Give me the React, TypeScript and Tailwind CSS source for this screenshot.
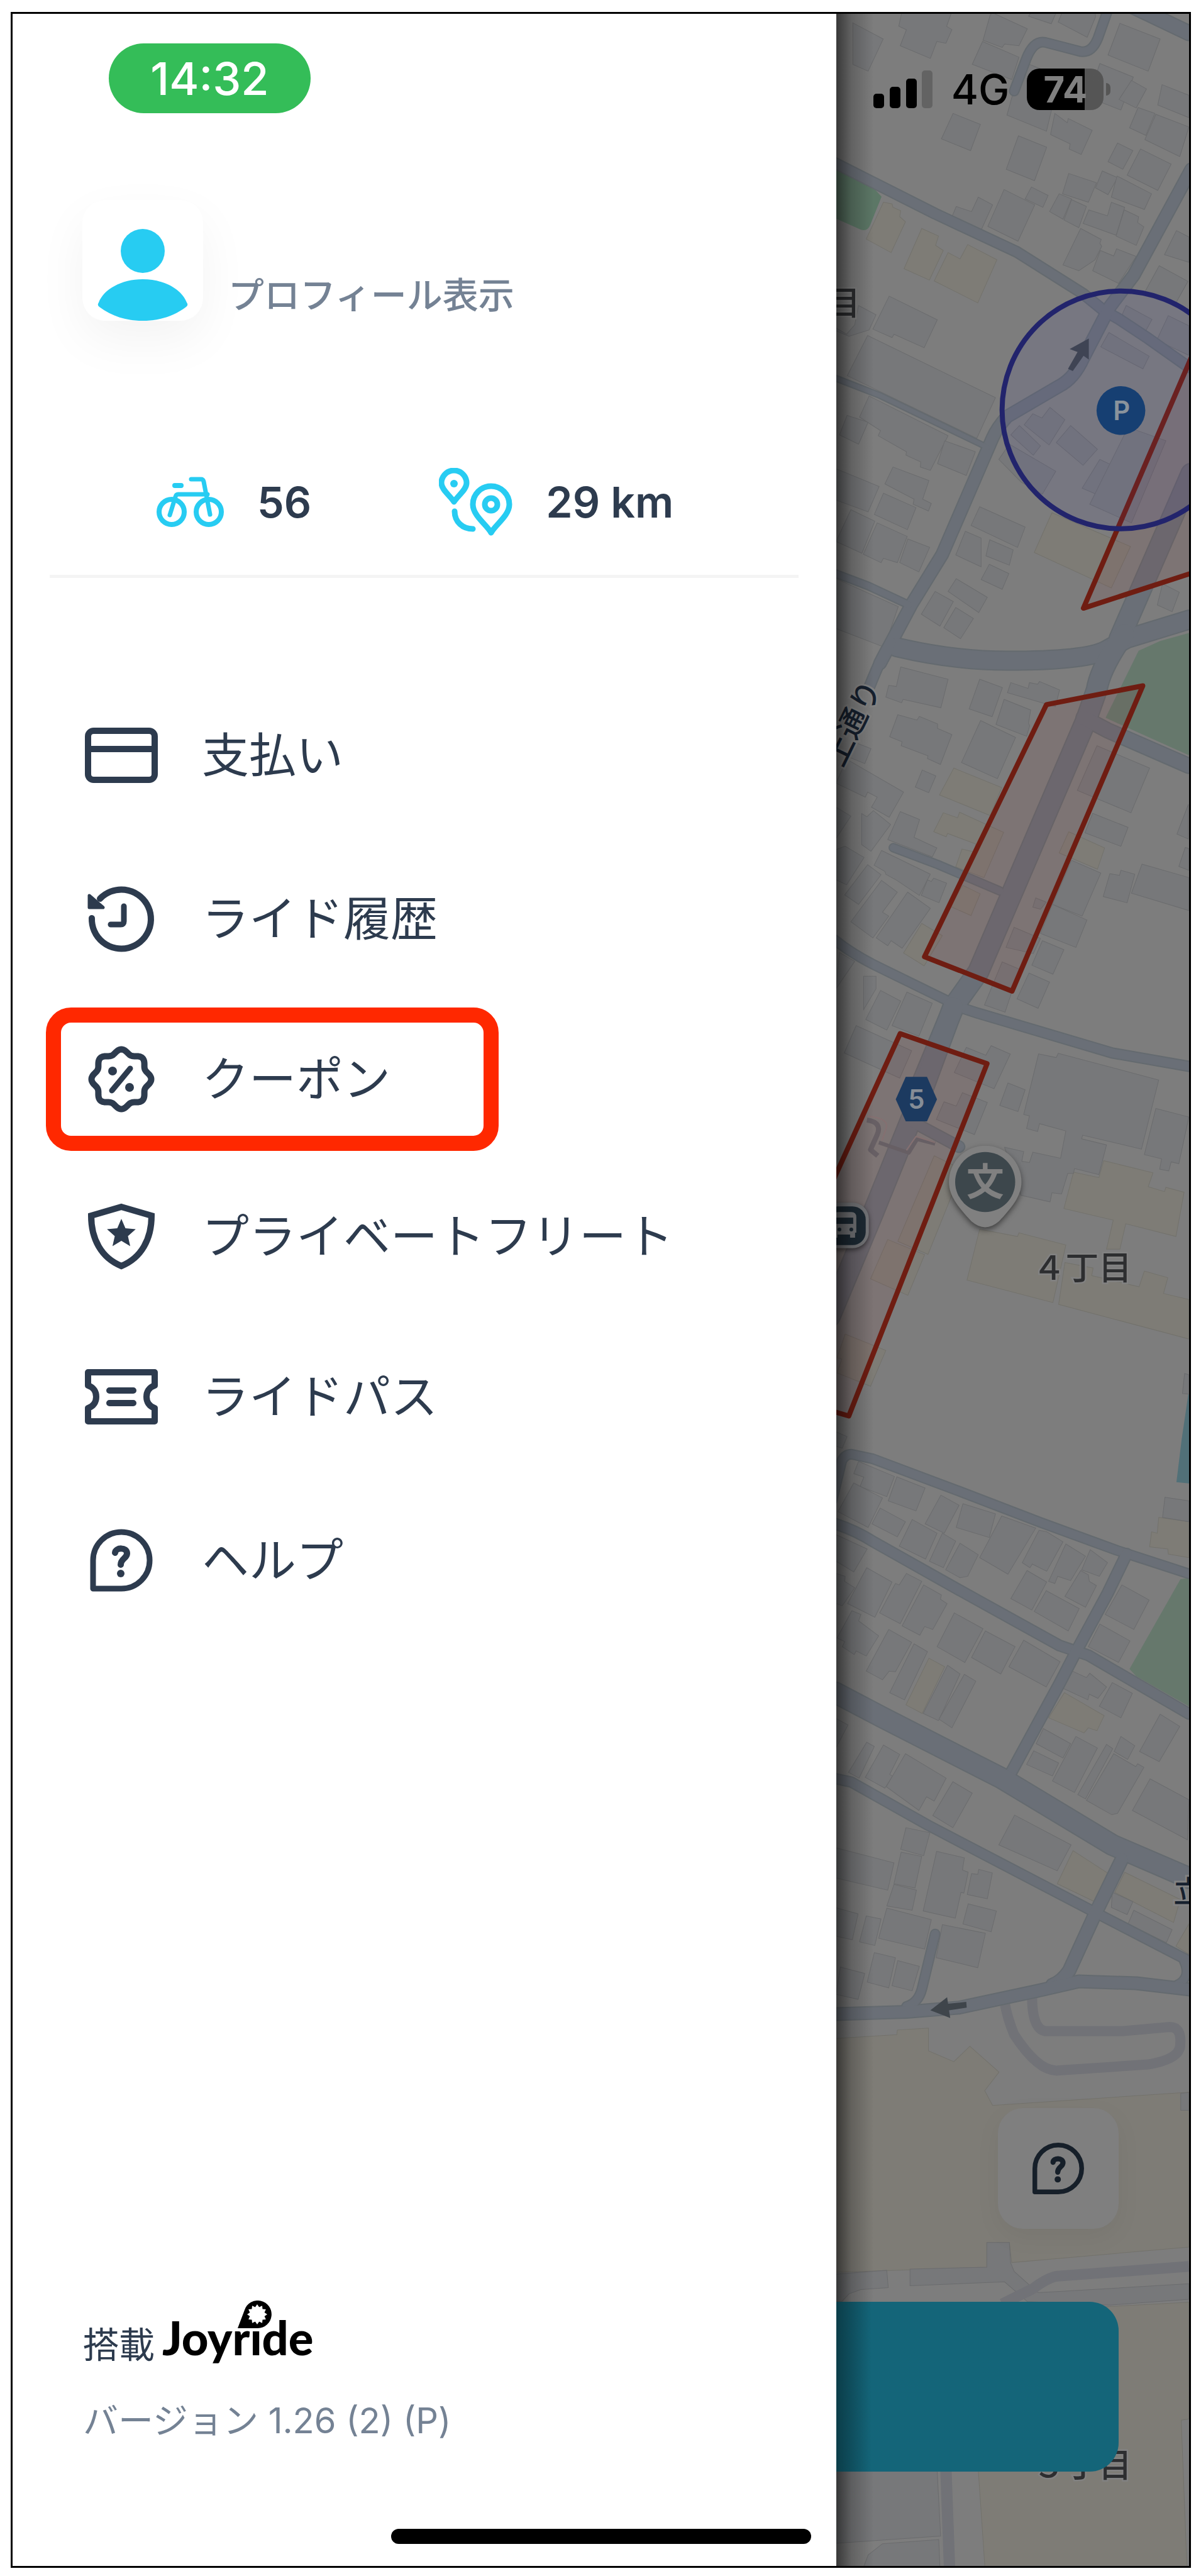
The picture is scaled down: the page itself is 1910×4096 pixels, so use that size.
import type { ReactNode } from 'react';

type Tile = 'a' | 'b' | 'c' | 'd' | 'e';

// every tile keeps its own local grid, the transform puts it on the map
const TILE_TRANSFORM: Record<Tile, string> = {
  a: 'translate(1320 0) scale(0.38265 0.67602)',
  b: 'translate(1320 1040) scale(0.38265 0.44643)',
  c: 'translate(1320 1600) scale(0.38265 0.48469)',
  d: 'translate(1320 2300) scale(0.38265 0.57398)',
  e: 'translate(1320 3150) scale(0.38265 0.61735)',
};

const ROADS: { tile: Tile; d: string; w: number }[] = [
  { tile: 'a', d: 'M1190 10 L1140 90 Q1115 125 1070 122 L920 100 Q870 95 840 140 L790 215', w: 13 },
  { tile: 'a', d: 'M1250 5 L1520 78', w: 22 },
  { tile: 'a', d: 'M40 385 L180 425 L460 505 L800 595 L1080 695 L1160 732 L1230 755 L1350 800 L1520 868', w: 15 },
  { tile: 'a', d: 'M1530 400 L1290 650 L1190 725 L1080 845 Q1040 895 980 912 L760 985 Q720 1010 700 1035 L490 1310 L360 1430 L230 1568', w: 18 },
  { tile: 'a', d: 'M40 893 L230 935 L680 1058', w: 7 },
  { tile: 'a', d: 'M40 1355 L180 1385 L350 1430', w: 10 },
  { tile: 'a', d: 'M300 1530 Q540 1562 760 1562 Q1100 1562 1180 1535 L1260 1510 L1520 1465', w: 28 },
  { tile: 'a', d: 'M1530 1120 L1230 1510', w: 31 },
  { tile: 'b', d: 'M1250 -60 Q1150 60 1135 140 L1090 250 L640 1150 L540 1270 L380 1600', w: 31 },
  { tile: 'b', d: 'M1080 240 L1180 285 L1520 412', w: 22 },
  { tile: 'b', d: 'M275 -30 Q240 10 185 130', w: 15 },
  { tile: 'b', d: 'M285 705 L470 765 L730 860', w: 11 },
  { tile: 'b', d: 'M40 1035 Q120 1090 230 1135 L480 1240 L540 1265', w: 13 },
  { tile: 'b', d: 'M540 1270 L640 1298 L1200 1440 L1520 1488', w: 14 },
  { tile: 'c', d: 'M535 20 L390 330 L200 700 L20 1040', w: 31 },
  { tile: 'c', d: 'M370 400 L560 480', w: 16 },
  { tile: 'd', d: 'M30 170 L70 60 Q85 42 110 42 L200 55 L560 145 L900 232 L1220 310 L1520 375', w: 13 },
  { tile: 'd', d: 'M40 235 Q130 255 200 285 L560 420 L980 575 L1100 602 L1520 765', w: 15 },
  { tile: 'd', d: 'M1260 320 L1180 430 L1050 590 L980 680 L760 950', w: 16 },
  { tile: 'd', d: 'M40 705 L240 775 L740 945 L1200 1130 L1520 1222', w: 31 },
  { tile: 'd', d: 'M40 945 L110 955 L430 1075 L760 1190 L1120 1315 L1520 1453', w: 14 },
  { tile: 'd', d: 'M1240 1170 L1130 1320 L1020 1480 Q990 1510 950 1520', w: 19 },
  { tile: 'd', d: 'M1500 1455 Q1530 1500 1470 1520', w: 12 },
  { tile: 'd', d: 'M460 1378 L405 1530 Q390 1570 340 1580', w: 13 },
  { tile: 'e', d: 'M40 112 L340 106 L560 95 L900 50 L1060 27 L1300 32 L1520 48', w: 18 },
];

const LANES: { d: string; w: number }[] = [
  { d: 'M750 80 Q760 120 790 165 Q890 260 970 258 L1350 242 Q1485 228 1484 190 Q1490 145 1440 145 L1240 156 L920 156 Q866 150 865 70', w: 16 },
  { d: 'M740 862 L870 822 Q940 790 980 790 L1520 765', w: 17 },
  { d: 'M505 1290 L520 1545', w: 18 },
];

const GREY_BUILDINGS: Record<Tile, string[]> = {
  a: [
    '116,54 243,92 180,168 116,152',
    '320,30 308,62 340,70 314,108 440,138 467,98 505,102 530,70 508,62 528,30',
    '690,35 660,95 740,112 750,104 810,108 845,68 700,30',
    '658,98 810,135 780,188 615,152',
    '860,30 850,38 945,56 965,30',
    '990,30 974,52 1095,88 1130,40 1128,30',
    '1232,55 1400,92 1350,168 1182,130',
    '535,268 649,294 608,356 486,328',
    '808,321 926,348 875,427 757,400',
    '822,145 980,180 925,310 760,272',
    '960,268 1012,290 1016,280 1116,308 1070,365 1020,352 1024,340 942,318',
    '1148,150 1288,182 1236,260 1100,230',
    '1280,190 1343,210 1300,255 1228,235',
    '1408,200 1520,225 1520,278 1390,248',
    '1308,254 1378,268 1340,320 1272,302',
    '1382,270 1520,300 1482,370 1336,330',
    '1222,338 1286,356 1244,400 1182,382',
    '1318,352 1446,388 1390,450 1262,414',
    '1018,410 1134,432 1100,478 992,458',
    '1158,404 1222,420 1182,460 1130,444',
    '1220,416 1364,458 1334,495 1196,466',
    '978,458 1030,470 994,518 938,500',
    '1030,472 1092,488 1060,538 998,520',
    '1102,496 1180,510 1196,478 1252,490 1216,556 1078,528',
    '1250,496 1310,512 1306,526 1332,536 1300,580 1216,558',
    '862,442 932,462 910,490 836,470',
    '748,448 876,484 806,570 680,535',
    '640,466 700,484 652,544 532,510 548,488 612,500',
    '1068,540 1154,566 1148,575 1156,582 1128,614 1060,640 994,626',
    '1150,592 1206,605 1218,588 1300,606 1226,670 1118,640',
    '1468,545 1520,560 1520,620 1418,602',
    '1396,628 1516,665 1462,720 1336,690',
    '268,700 469,756 414,822 288,790 280,798 200,778',
    '140,722 213,744 184,780 100,795 46,782 46,775 90,790 124,768',
    '178,793 712,940 634,1036 93,888',
    '92,982 180,998 140,1050 60,1028',
    '184,936 514,1030 440,1112 398,1104 400,1092 338,1076 340,1068 222,1030 232,1018 144,986',
    '500,1042 628,1068 590,1124 470,1096',
    '46,1108 226,1150 180,1210 46,1182',
    '284,1104 434,1136 408,1180 444,1190 432,1208 368,1192 372,1180 250,1144',
    '244,1166 380,1200 344,1252 206,1216',
    '108,1205 208,1232 154,1308 46,1280',
    '218,1236 343,1268 302,1330 244,1320 234,1330 160,1310',
    '346,1274 437,1294 392,1352 312,1330',
    '646,1198 836,1246 804,1294 610,1242',
    '586,1256 652,1272 652,1340 546,1312',
    '688,1276 786,1300 770,1336 672,1314',
    '686,1334 768,1356 740,1393 652,1370',
    '548,1368 678,1412 642,1448 514,1398',
    '460,1398 536,1422 480,1480 402,1452',
    '546,1436 620,1462 566,1510 496,1484',
    '46,1368 306,1434 248,1530 46,1486',
    '1410,1380 1480,1400 1450,1446 1388,1430',
    '1258,722 1366,755 1336,786 1232,756',
    '1186,786 1354,842 1328,872 1152,820',
    '1434,746 1520,770 1520,840 1386,804',
    '940,963 1002,992 936,1052 832,1004 868,978 906,988',
    '812,1006 900,1054 870,1076 776,1028',
    '1026,1006 1138,1062 1078,1100 966,1046',
    '770,1050 964,1114 908,1168 820,1140 726,1086',
    '1148,1086 1200,1100 1148,1172 1074,1154',
    '1266,1010 1424,1042 1280,1236 1106,1192',
  ],
  b: [
    '316,58 514,102 484,204 326,174 320,186 254,166 266,124 298,128',
    '646,102 741,132 698,236 602,208',
    '776,114 848,135 854,114 888,120 896,110 980,140 962,200 762,150',
    '748,174 859,212 850,260 855,268 842,306 714,264',
    '304,229 384,248 394,235 470,262 470,278 530,300 482,407 428,386 430,376 318,340 322,326 270,308',
    '650,250 796,310 720,458 570,400',
    '130,330 192,350 166,404 80,374',
    '90,388 328,506 268,596 194,560 218,524 178,506 168,524 46,474',
    '406,427 463,448 433,508 377,488',
    '46,560 108,592 46,672',
    '153,583 175,594 202,572 274,622 192,718 153,694',
    '314,576 395,604 372,668 467,706 448,738 262,676',
    '46,712 84,700 163,740 90,838 46,820',
    '236,715 440,800 394,876 300,822 254,800 250,790 205,768',
    '178,766 234,802 140,908 82,874',
    '236,822 302,864 240,936 266,950 200,1028 108,970',
    '345,864 440,922 322,1065 276,1038 262,1056 214,1028',
    '428,820 444,826 454,814 508,832 476,902 402,876',
    '60,1080 124,1112 46,1210',
    '161,1165 213,1165 213,1210 161,1285',
    '232,1216 316,1254 258,1358 170,1320',
    '342,1222 448,1262 392,1380 280,1342',
    '130,1342 362,1432 312,1530 80,1440',
    '1136,340 1356,420 1278,580 1054,500',
    '1118,582 1266,632 1236,700 1086,652',
    '1030,750 1152,796 1074,950 950,908',
    '950,908 1094,964 1048,1062 900,1012',
    '880,885 924,900 900,925 868,918',
    '1190,798 1230,804 1236,786 1294,800 1262,902 1162,880',
    '1324,764 1520,812 1520,930 1280,868',
    '1518,550 1518,674 1470,656',
    '1505,704 1520,708 1520,786 1478,772',
    '790,990 900,1030 870,1084 756,1062',
    '908,1038 998,1070 952,1158 864,1126',
    '852,1154 938,1186 890,1280 802,1246',
    '740,1114 812,1140 752,1294 666,1268',
    '694,1414 774,1444 706,1568 540,1510 590,1420 672,1448',
  ],
  c: [
    '892,174 966,186 974,172 1394,260 1322,488 1076,442 1072,454 1176,474 1144,572 1042,552 1038,568 1014,568 988,636 948,632 940,662 818,640 750,482 830,496 822,528 854,532 868,498 984,518 1006,428 896,404 888,430 842,420 854,378 830,374',
    '764,270 836,292 806,364 730,344',
    '574,302 678,334 624,440 465,390 497,332 548,346',
    '1382,354 1520,382 1478,536 1446,530 1436,560 1398,554 1406,520 1334,506',
    '46,1420 92,1436 72,1474 46,1468',
    '1502,1228 1520,1232 1520,1296 1493,1294',
  ],
  d: [
    '140,62 290,104 258,160 146,132 162,106 120,96',
    '120,122 240,164 180,246 54,202',
    '300,105 418,136 380,200 264,172',
    '230,192 336,230 302,272 196,236',
    '484,156 560,184 498,262 418,236',
    '576,180 712,208 686,274 548,246',
    '738,214 880,248 764,376 646,330',
    '364,224 468,262 420,334 310,298',
    '490,262 546,284 494,358 436,340',
    '564,290 640,322 596,382 564,386 504,364',
    '894,254 926,258 994,286 926,368 866,348 856,358 824,344',
    '1006,292 1088,326 1026,394 972,382 960,402 934,396',
    '1108,308 1180,344 1146,382 1072,364',
    '844,366 926,398 864,476 776,444',
    '1068,366 1100,378 1104,396 1134,408 1088,468 1002,438',
    '924,422 1062,472 1016,534 874,480',
    '1240,406 1354,448 1290,530 1170,488',
    '1148,515 1274,562 1226,622 1100,578',
    '46,266 176,306 120,370 46,340',
    '46,374 84,382 82,396 124,414 72,464 46,458',
    '174,358 280,398 208,496 94,458',
    '340,374 404,396 314,514 228,484 294,402 310,406',
    '412,406 486,434 482,446 510,458 450,530 416,522 396,546 322,520',
    '112,478 150,488 140,506 224,548 172,604 130,590 122,600 72,578 82,564 50,554',
    '266,530 362,566 294,648 268,646 240,670 172,646',
    '372,570 428,592 332,726 270,706',
    '540,484 660,528 584,622 468,578',
    '670,534 794,578 734,654 612,608',
    '830,560 982,620 924,690 768,634',
    '512,630 564,654 474,784 410,764',
    '582,655 630,674 530,804 476,780',
    '46,778 96,796 46,860',
    '174,844 206,856 142,944 98,928',
    '244,852 312,878 270,934 282,938 250,972 168,942',
    '336,876 506,944 456,1008 424,996 392,1034 256,968',
    '534,954 615,986 534,1082 450,1048',
    '1030,645 1092,664 1106,652 1176,690 1140,722 1104,710 1098,726 994,694',
    '1200,678 1284,708 1236,776 1146,744',
    '912,806 1026,848 994,888 882,848',
    '872,868 976,902 950,938 842,906',
    '1048,828 1138,860 1042,984 950,952',
    '1176,850 1202,862 1088,1002 1056,990',
    '1236,828 1294,854 1264,892 1208,870',
    '1206,876 1298,912 1306,904 1332,914 1222,1042 1198,1046 1092,1006',
    '1400,766 1482,800 1396,898 1314,870',
    '1358,946 1520,1004 1514,1116 1284,1034',
    '1420,162 1520,172 1520,230 1410,218',
    '792,1047 1028,1130 970,1202 726,1130',
    '338,1082 438,1096 412,1160 316,1142',
    '318,1150 404,1162 376,1250 288,1238',
    '46,1138 288,1180 262,1256 46,1222',
    '288,1240 382,1256 364,1312 258,1300',
    '466,1148 582,1166 574,1200 598,1206 580,1264 568,1262 544,1334 410,1314',
    '642,1198 699,1208 678,1280 594,1268 612,1210 638,1212',
    '598,1294 716,1314 694,1372 576,1350',
    '46,1305 138,1322 114,1394 46,1384',
    '172,1328 234,1336 208,1410 144,1400',
    '258,1306 444,1338 416,1420 224,1390',
    '490,1352 670,1376 638,1472 464,1444',
    '206,1430 294,1444 266,1528 176,1512',
    '304,1452 394,1468 364,1536 280,1522',
    '64,1470 166,1488 138,1560 46,1546',
    '1200,1262 1286,1288 1262,1324 1196,1304',
    '1290,1312 1450,1366 1426,1402 1266,1350',
  ],
  e: [
    '46,785 258,775 264,820 150,825 100,836 70,856 46,856',
    '355,772 676,767 676,703 770,703 775,755 790,778 890,833 1520,810 1520,850 1190,865 845,856 750,805 355,815',
    '46,1290 468,1290 483,1463 46,1482',
    '160,1545 180,1512 240,1483 475,1472 480,1545',
    '1486,317 1520,315 1520,361 1486,361',
  ],
};

const SAND_BUILDINGS: Record<Tile, string[]> = {
  a: [
    '244,478 280,482 284,490 316,498 312,512 336,524 276,597 172,565',
    '404,540 474,558 462,580 494,592 436,662 330,635',
    '514,597 564,612 596,578 718,614 638,716 456,664',
    '948,1212 1276,1292 1196,1390 874,1306',
  ],
  b: [
    '538,420 738,490 690,590 478,516',
    '494,580 554,598 562,578 746,650 664,812 546,774 572,710 622,720 630,692 512,654 506,666 454,648',
    '576,840 648,870 610,948 520,914',
    '1018,648 1168,706 1138,782 978,724',
    '404,976 490,1020 414,1128 328,1082',
  ],
  c: [
    '456,510 546,545 545,610 430,835 304,792',
    '262,786 416,836 346,970 190,916',
    '84,1098 254,1152 190,1270 50,1226 70,1180 50,1176',
    '646,752 804,776 810,764 1006,804 952,994 593,920',
    '1164,526 1370,566 1350,612 1418,628 1424,614 1500,630 1466,776 1256,734 1232,818 1176,818 1204,722 998,684 1038,564 1144,582',
    '1002,862 1120,880 1114,905 1312,942 1334,890 1432,912 1414,964 1520,984 1520,1114 976,1000',
  ],
  d: [
    '434,610 500,634 406,764 338,740',
    '1000,706 1166,770 1136,812 1100,804 1082,818 934,776',
    '1394,218 1520,230 1520,330 1434,320 1432,306 1356,300 1364,258 1388,262',
    '1036,1146 1180,1208 1126,1288 970,1238',
    '1252,1206 1484,1282 1456,1346 1210,1262',
    '1520,1350 1520,1434 1466,1412',
  ],
  e: [
    '46,175 300,165 302,153 432,148 432,207 538,235 605,195 727,262 667,310 700,348 1520,314 1520,715 780,755 770,703 676,703 676,767 46,780',
    '640,1290 668,1545 1512,1545 1488,1163 1520,1160 1520,858 1150,870 1000,1290',
  ],
};

const TILES = Object.keys(TILE_TRANSFORM) as Tile[];

const MAP_TEXT = 'font-["Inter","Noto_Sans_CJK_JP",sans-serif]';

const CityMap = () => (
  <svg
    className="absolute inset-0 h-full w-full"
    viewBox="1338 22 565 4079"
    preserveAspectRatio="xMinYMin slice"
    aria-label="地図"
  >
    <defs>
      <linearGradient id="drawerShadow" x1="0" x2="1" y1="0" y2="0">
        <stop offset="0" stopColor="#000" stopOpacity="0.55" />
        <stop offset="0.4" stopColor="#000" stopOpacity="0.22" />
        <stop offset="1" stopColor="#000" stopOpacity="0" />
      </linearGradient>
    </defs>
    <rect x="1330" y="0" width="600" height="4130" fill="#7d7d7d" />

    {/* parks and water */}
    <g transform={TILE_TRANSFORM.a}>
      <path d="M40 398 L180 430 L236 465 L190 530 Q178 548 150 543 L40 515Z" fill="#5c7766" />
    </g>
    <g transform={TILE_TRANSFORM.b} fill="#66786c">
      <path d="M1530 -66 L1400 -35 L1310 0 L1172 240 L1530 378Z" />
    </g>
    <g transform={TILE_TRANSFORM.d}>
      <path d="M1485 390 L1530 385 V748 L1300 660 L1272 640Z" fill="#66786c" />
      <path d="M1530 -180 L1490 0 L1468 120 L1530 124Z" fill="#517078" />
    </g>

    {TILES.map((tile) => (
      <g key={tile} transform={TILE_TRANSFORM[tile]} strokeWidth="1">
        {SAND_BUILDINGS[tile].map((points) => (
          <polygon key={points} points={points} fill="#7e7c76" stroke="#73726c" vectorEffect="non-scaling-stroke" />
        ))}
        {GREY_BUILDINGS[tile].map((points) => (
          <polygon key={points} points={points} fill="#77787a" stroke="#6b6c6e" vectorEffect="non-scaling-stroke" />
        ))}
      </g>
    ))}

    <g transform={TILE_TRANSFORM.e} fill="none" stroke="#717277">
      {LANES.map((lane) => (
        <path key={lane.d} d={lane.d} strokeWidth={lane.w} vectorEffect="non-scaling-stroke" />
      ))}
    </g>

    {/* casings first so that crossings stay open */}
    <g fill="none" stroke="#646a6f" strokeLinecap="round" strokeLinejoin="round">
      {ROADS.map((road) => (
        <g key={road.d} transform={TILE_TRANSFORM[road.tile]}>
          <path d={road.d} strokeWidth={road.w + 4} vectorEffect="non-scaling-stroke" />
        </g>
      ))}
    </g>
    <g fill="none" stroke="#6a6f77" strokeLinecap="round" strokeLinejoin="round">
      {ROADS.map((road) => (
        <g key={road.d} transform={TILE_TRANSFORM[road.tile]}>
          <path d={road.d} strokeWidth={road.w} vectorEffect="non-scaling-stroke" />
        </g>
      ))}
    </g>

    {/* footbridge */}
    <g transform={TILE_TRANSFORM.c} fill="none" strokeLinejoin="round">
      <path d="M175 392 Q240 400 218 440 L190 490 L220 510" stroke="#65666b" strokeWidth="8" vectorEffect="non-scaling-stroke" />
      <path d="M225 466 L350 500 L385 455 L460 470" stroke="#65666b" strokeWidth="6" vectorEffect="non-scaling-stroke" />
      <path d="M175 380 Q270 385 255 420 L238 460 M340 492 L380 446 L460 466" stroke="#86797a" strokeWidth="2" vectorEffect="non-scaling-stroke" />
    </g>

    {/* one way arrows */}
    <g fill="#3f454b">
      <path transform={TILE_TRANSFORM.a} d="M1015 872 L1055 832 L1022 825 L1102 800 V850 L1080 841 L1035 877Z" />
      <path transform={TILE_TRANSFORM.e} d="M440 102 L510 68 L514 85 L590 80 L592 95 L518 102 L523 122Z" />
    </g>

    {/* zones */}
    <g fill="#7d2d2d" fillOpacity="0.11" stroke="#6f1d12" strokeWidth="8" strokeLinejoin="round">
      <path d="M1915 549 L1733 972 L1915 913Z" />
      <path d="M1674 1126 L1828 1096 L1619 1584 L1479 1529Z" />
      <path d="M1440 1652 L1579 1700 L1358 2263 L1310 2249 V1937Z" />
    </g>
    <circle cx="1793" cy="655" r="190" fill="#4848a8" fillOpacity="0.1" stroke="#22246c" strokeWidth="8" />

    <g className={MAP_TEXT} textAnchor="middle">
      <circle cx="1793" cy="656" r="39" fill="#163f72" />
      <text x="1794" y="671" fontSize="42" fontWeight="600" fill="#8a939c">P</text>

      <path d="M1433 1757 L1449 1721 H1483 L1499 1757 L1483 1792 H1449Z" fill="#1c3a60" />
      <text x="1466" y="1772" fontSize="42" fontWeight="600" fill="#868d96">5</text>

      <path
        d="M1576 1831 A58 58 0 0 1 1634 1889 C1634 1912 1618 1930 1598 1952 Q1576 1971 1554 1952 C1534 1930 1518 1912 1518 1889 A58 58 0 0 1 1576 1831Z"
        fill="#808080"
        className="drop-shadow-[0_4px_5px_rgba(0,0,0,0.5)]"
      />
      <circle cx="1576" cy="1889" r="48" fill="#3d474c" />
      <text x="1576" y="1911" fontSize="60" fontWeight="700" fill="#808080">文</text>

      <rect x="1314" y="1922" width="76" height="73" rx="26" fill="#76777a" className="drop-shadow-[0_3px_4px_rgba(0,0,0,0.5)]" />
      <rect x="1320" y="1928" width="65" height="62" rx="21" fill="#1d2a34" />
      <path d="M1330 1945 Q1330 1937 1342 1937 H1362 Q1370 1937 1370 1945 V1970 H1368 V1978 H1360 V1973 H1340 V1978 H1330Z" fill="#76777a" />
      <path d="M1338 1946 H1365 V1956 H1338Z" fill="#1d2a34" />
      <circle cx="1343" cy="1965" r="3" fill="#1d2a34" />
      <circle cx="1362" cy="1965" r="3" fill="#1d2a34" />

      <g fill="#2d2e30" stroke="#828282" strokeWidth="5" paintOrder="stroke" fontSize="53" fontWeight="500">
        <text x="1731" y="2045">４丁目</text>
        <text x="1731" y="3959">５丁目</text>
        <text x="1350" y="503">目</text>
      </g>
      <g fill="#16202e" stroke="#828282" strokeWidth="6" paintOrder="stroke" fontSize="48" fontWeight="500">
        <text x="1901" y="3041">立</text>
        <text transform="translate(1379 1163) rotate(-64)">上通り</text>
      </g>
    </g>

    <rect x="1338" y="0" width="60" height="4130" fill="url(#drawerShadow)" />
  </svg>
);

const StatusIcons = () => (
  <div className="relative flex h-[66px] items-center pl-[59px] text-black">
    <svg width="94" height="60" viewBox="0 0 94 60" aria-hidden="true">
      <rect x="0" y="37" width="17" height="23" rx="5" />
      <rect x="26" y="26" width="17" height="34" rx="5" />
      <rect x="52" y="13" width="17" height="47" rx="5" />
      <rect x="77" y="0" width="17" height="60" rx="5" fill="#636363" />
    </svg>
    <span className="ml-[30px] text-[66px] leading-none font-medium">4G</span>
    <div className="ml-7 flex h-[66px] w-[122px] items-center justify-center rounded-[20px] bg-linear-to-r from-black from-75% to-[#555555] to-75% text-[58px] leading-none font-bold text-[#808080]">
      74
    </div>
    <div className="ml-1 h-5 w-[7px] rounded-r-full bg-[#555555]" />
  </div>
);

const Glyph = ({ children, className = 'size-[116px]' }: { children: ReactNode; className?: string }) => (
  <svg
    className={className}
    viewBox="0 0 116 116"
    fill="none"
    stroke="currentColor"
    strokeWidth="10"
    strokeLinecap="round"
    strokeLinejoin="round"
    aria-hidden="true"
  >
    {children}
  </svg>
);

const ring = (count: number, radiusAt: (i: number) => number, cx: number, cy: number) =>
  Array.from({ length: count }, (_, i) => {
    const angle = (i / count) * Math.PI * 2 - Math.PI / 2;
    const r = radiusAt(i);
    return `${(cx + r * Math.cos(angle)).toFixed(2)},${(cy + r * Math.sin(angle)).toFixed(2)}`;
  }).join(' ');

const BADGE = ring(160, (i) => 44 + 3.5 * Math.cos((i / 160) * Math.PI * 16), 58, 58);
const STAR = ring(10, (i) => (i % 2 ? 11 : 24), 58, 54);
const SUN = ring(24, (i) => (i % 2 ? 12 : 16), 31, 22);

const CardIcon = () => (
  <Glyph>
    <rect x="5" y="19" width="106" height="78" rx="9" />
    <path d="M5 48 H111" />
  </Glyph>
);

const HistoryIcon = () => (
  <Glyph>
    <path d="M11 57 A47 47 0 1 0 24 26" />
    <path d="M7 21 L29 40 H7Z" fill="currentColor" strokeWidth="5" />
    <path d="M62 38 V62 Q62 67 57 67 H41" strokeWidth="9" />
  </Glyph>
);

const CouponIcon = () => (
  <Glyph>
    <polygon points={BADGE} />
    <path d="M72 41 L43 76" strokeWidth="9" />
    <circle cx="44" cy="45" r="7" fill="currentColor" stroke="none" />
    <circle cx="71" cy="71" r="7" fill="currentColor" stroke="none" />
  </Glyph>
);

const ShieldIcon = () => (
  <Glyph>
    <path d="M58 11 L106 25 C106 62 90 92 58 105 C26 92 10 62 10 25Z" strokeLinejoin="miter" />
    <polygon points={STAR} fill="currentColor" stroke="none" />
  </Glyph>
);

const TicketIcon = () => (
  <Glyph>
    <path d="M5 19 H111 V40 C102 43 98 50 98 58 C98 66 102 73 111 76 V97 H5 V76 C14 73 18 66 18 58 C18 50 14 43 5 40Z" />
    <path d="M39 48 H77 M39 68 H77" />
  </Glyph>
);

const HelpIcon = ({ className }: { className?: string }) => (
  <Glyph className={className}>
    <path d="M13 103 V58 A45 45 0 1 1 58 103Z" strokeWidth="9" />
    <path d="M48 46 C49 37 67 37 67 47 C67 55 57 55 57 65" />
    <circle cx="57" cy="79" r="6" fill="currentColor" stroke="none" />
  </Glyph>
);

const BikeIcon = () => (
  <svg className="w-[107px]" viewBox="0 0 107 80" fill="none" stroke="currentColor" strokeWidth="8" strokeLinejoin="round" aria-hidden="true">
    <circle cx="24" cy="56" r="20" />
    <circle cx="83" cy="56" r="20" />
    <path d="M55 4 H71 Q74 4 75 8 L85 60 M81 28 H34 Q31 28 30 32 L21 61" strokeLinecap="round" strokeWidth="7" />
    <path d="M29 14 H39" strokeLinecap="round" />
  </svg>
);

const RouteIcon = () => (
  <svg className="w-[117px]" viewBox="0 0 117 109" fill="none" stroke="currentColor" strokeWidth="9" strokeLinejoin="round" aria-hidden="true">
    <path d="M24 54 C18 44 4 35 4 24 A20 20 0 0 1 44 24 C44 35 30 44 24 54Z" />
    <circle cx="24" cy="25" r="6" fill="currentColor" stroke="none" />
    <path d="M83 103 C76 90 54 76 54 58 A29 29 0 0 1 112 58 C112 76 90 90 83 103Z" />
    <circle cx="83" cy="58" r="10" />
    <path d="M25 69 C25 86 38 97 54 97" strokeLinecap="round" />
  </svg>
);

const MENU = [
  { label: '支払い', icon: <CardIcon />, height: 'h-[260px]' },
  { label: 'ライド履歴', icon: <HistoryIcon />, height: 'h-[260px]' },
  { label: 'クーポン', icon: <CouponIcon />, height: 'h-[250px]', highlighted: true },
  { label: 'プライベートフリート', icon: <ShieldIcon />, height: 'h-[250px]' },
  { label: 'ライドパス', icon: <TicketIcon />, height: 'h-[260px]' },
  { label: 'ヘルプ', icon: <HelpIcon />, height: 'h-[260px]' },
];

const Drawer = () => (
  <aside className="flex w-[70%] shrink-0 flex-col bg-white pt-[47px] pb-[35px] text-[#2d3b4e]">
    <div className="ml-[153px] flex h-[111px] w-[321px] items-center justify-center rounded-full bg-[#34bd58] text-[72px] leading-none font-medium text-white">
      14:32
    </div>

    <button type="button" className="mt-[138px] ml-[111px] flex items-end gap-10 self-start text-left">
      <span className="flex size-48 items-end justify-center rounded-[36px] bg-white shadow-[0_30px_80px_rgba(0,0,0,0.05)]">
        <svg className="w-36 text-[#27ccf2]" viewBox="0 0 144 146" fill="currentColor" aria-hidden="true">
          <circle cx="72" cy="35" r="35" />
          <path d="M2 117 C10 96 38 80 72 80 S134 96 142 117 Q145 121 141 124 C121 139 98 146 72 146 S23 139 3 124 Q-1 121 2 117Z" />
        </svg>
      </span>
      <span className="text-[57px] leading-[80px] font-medium text-[#748294]">プロフィール表示</span>
    </button>

    <div className="mt-[234px] flex h-[108px] items-center pl-[229px] text-[68px] font-semibold">
      <span className="text-[#27ccf2]"><BikeIcon /></span>
      <span className="ml-[53px]">56</span>
      <span className="ml-[203px] text-[#27ccf2]"><RouteIcon /></span>
      <span className="ml-[53px]">29 km</span>
    </div>
    <hr className="mt-[62px] mr-[60px] ml-[59px] border-t-[5px] border-[#f4f4f4]" />

    <nav className="mt-[152px]">
      <ul>
        {MENU.map((item) => (
          <li key={item.label} className={`relative ${item.height}`}>
            <button type="button" className="flex h-full w-full items-center gap-[70px] pl-[115px] text-left text-[75px]">
              {item.icon}
              {item.label}
            </button>
            {item.highlighted && (
              <div className="pointer-events-none absolute inset-y-[11px] left-[53px] w-[720px] rounded-[40px] border-[24px] border-[#ff2800]" />
            )}
          </li>
        ))}
      </ul>
    </nav>

    <footer className="mt-auto flex flex-col gap-10 pl-[112px] text-[57px] leading-[80px]">
      <div className="flex items-start gap-3">
        搭載
        <span className="relative font-['Lato',sans-serif] text-[74px] leading-[56px] font-black text-black">
          Joyride
          <svg className="absolute -top-[31px] left-[120px] w-[54px]" viewBox="0 0 54 44" aria-hidden="true">
            <path d="M0 44 L11 15 A22 22 0 1 1 32 44Z" />
            <polygon points={SUN} fill="#fff" />
          </svg>
        </span>
      </div>
      <p className="text-[56px] text-[#748294]">バージョン 1.26 (2) (P)</p>
    </footer>
    <div className="mt-[132px] mr-[40px] h-6 w-[668px] self-end rounded-full bg-black" />
  </aside>
);

const App = () => {
  return (
    <div className="flex min-h-screen bg-white pt-[19px] pr-4 pb-[13px] pl-[17px] font-['Inter','Noto_Sans_CJK_JP',sans-serif]">
      <main className="flex w-full overflow-hidden border-[3px] border-black">
        <Drawer />
        <section className="relative flex min-w-0 flex-1 flex-col overflow-hidden pt-[87px] pb-[150px]">
          <CityMap />
          <StatusIcons />
          <button
            type="button"
            aria-label="ヘルプ"
            className="relative mt-auto mr-[112px] flex size-48 items-center justify-center self-end rounded-[40px] bg-[#7f7f7f] text-[#161f29] shadow-[0_12px_40px_rgba(0,0,0,0.05)]"
          >
            <HelpIcon className="size-24" />
          </button>
          <div className="relative mt-[116px] mr-[112px] h-[270px] rounded-r-[46px] bg-linear-to-r from-[#0b3d49] to-[#146579] to-[56px]" />
        </section>
      </main>
    </div>
  );
};

export default App;
